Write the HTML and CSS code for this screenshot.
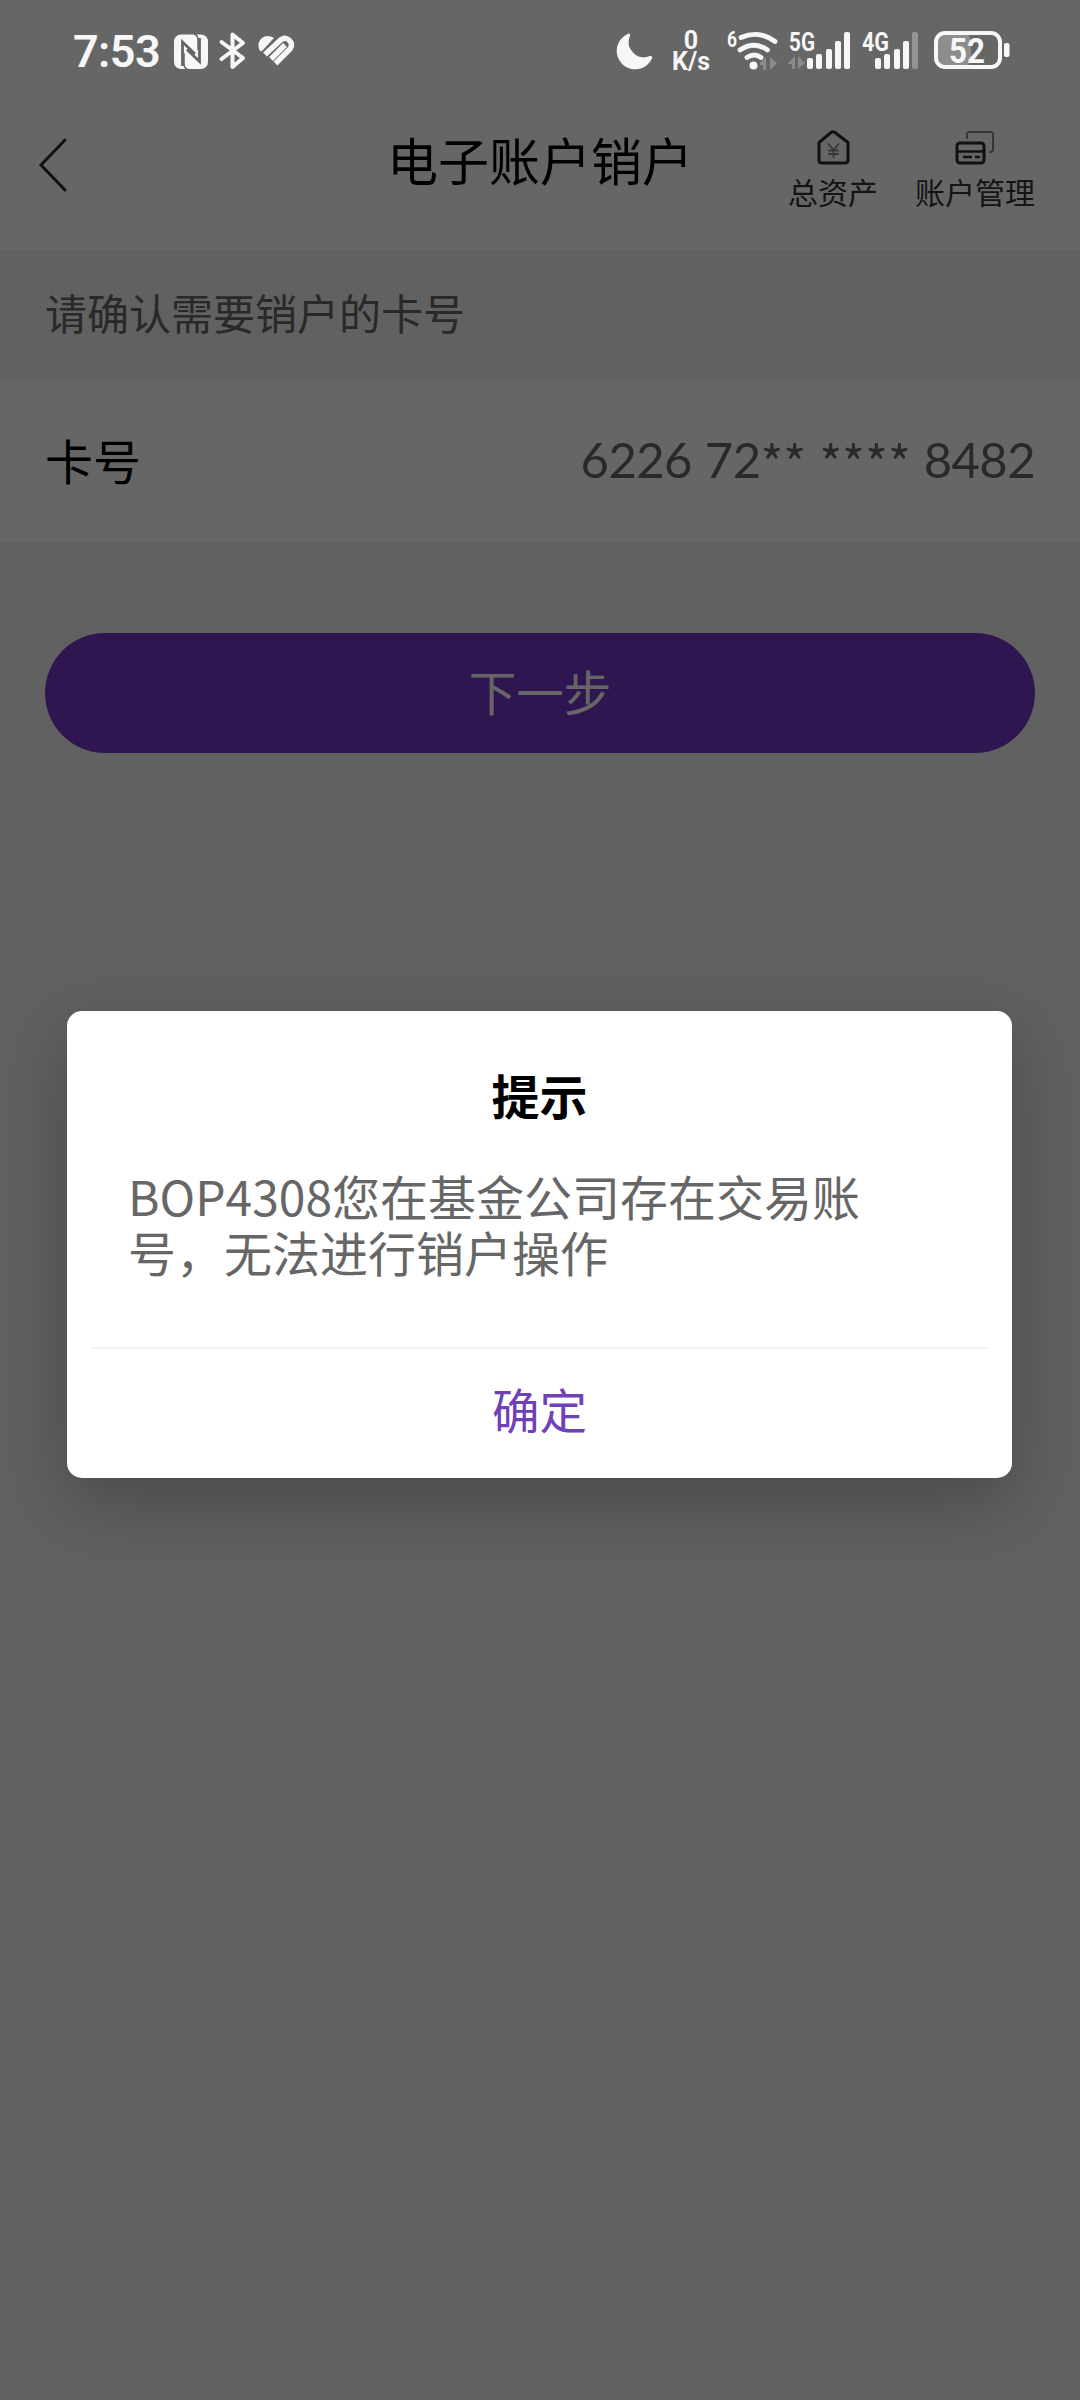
FILE: index.html
```html
<!DOCTYPE html>
<html lang="zh-CN">
<head>
<meta charset="utf-8">
<title>电子账户销户</title>
<link rel="stylesheet" href="styles.css">
</head>
<body>
<div class="screen">
  <header class="nav">
    <svg class="back" width="32" height="56" viewBox="0 0 32 56"><path d="M28 3 4 28l24 25"/></svg>
    <h1 class="title">电子账户销户</h1>
    <div class="actions">
      <div class="action">
        <svg width="36" height="36" viewBox="0 0 36 36" fill="none" stroke="#2b2b2b" stroke-width="3" stroke-linejoin="round" stroke-linecap="round">
          <path d="M4 13.5 16 3.5q2-1.600 4 0l13 10V31q0 3-3 3H7q-3 0-3-3z"/>
          <path stroke="#888" stroke-width="1.800" d="m13.500 15 5 6 5-6M18.500 21v7M14 21.500h9M14 25h9"/>
        </svg>
        <span>总资产</span>
      </div>
      <div class="action">
        <svg width="40" height="36" viewBox="0 0 40 36" fill="none" stroke="#2b2b2b" stroke-width="3" stroke-linejoin="round" stroke-linecap="round">
          <path stroke="#888" stroke-width="2" d="M12 9V5q0-2 2-2h22q2 0 2 2v15q0 3-3 3"/>
          <rect x="2" y="14" width="27" height="20" rx="3"/>
          <path d="M2 22.500h27" stroke-width="2.600"/><path stroke-linecap="butt" stroke-width="2.600" d="M8 28h9M20 28h5"/>
        </svg>
        <span>账户管理</span>
      </div>
    </div>
  </header>
  <p class="hint">请确认需要销户的卡号</p>
  <div class="row"><span class="label">卡号</span><span class="number">6226 72<span class="stars">** ****</span> 8482</span></div>
  <div class="submit"><button class="next">下一步</button></div>

  <div class="mask">
    <section class="dialog">
      <h2 class="dialog-title">提示</h2>
      <p class="dialog-text">BOP4308您在基金公司存在交易账号，无法进行销户操作</p>
      <button class="confirm">确定</button>
    </section>
  </div>

  <div class="status">
    <span class="clock">7:53</span>
    <svg class="nfc" width="34" height="36" viewBox="0 0 34 36">
      <rect x="0" y="0.500" width="34" height="34.500" rx="7" fill="#f7f7f7"/>
      <path d="M8.500 32V8L21 20M25.500 4v23.500L13 15.500" fill="none" stroke="#666" stroke-width="2.800"/>
      <path d="M20 0q4 1 4 6v10M14 35.500q-4-1-4-6V19" fill="none" stroke="#666" stroke-width="1.500"/>
    </svg>
    <svg class="bt" width="28" height="40" viewBox="0 0 28 40"><path d="M2.500 11 24 27 13.500 36V3.500L24 12 2.500 28" fill="none" stroke="#f7f7f7" stroke-width="4" stroke-linejoin="round" stroke-linecap="round"/></svg>
    <svg class="health" width="36" height="32" viewBox="0 0 36 32">
      <path d="M1 14Q-1 7 4 3t12 0L4 16Q2 17 1 14z" fill="#f7f7f7"/>
      <path d="M7 19.500 21.500 6q5-5 9.500-1t1 9L17.500 28.500M13 24 27 10" fill="none" stroke="#f7f7f7" stroke-width="5.400"/>
    </svg>
    <svg class="moon" width="37" height="37" viewBox="0 0 37 37"><path d="M14 2.500Q10 12 17 19.500T34 23Q37 22.500 36 25.500A18.500 18.500 0 1 1 11.500 1Q14.500-.5 14 2.500z" fill="#f7f7f7"/></svg>
    <div class="speed"><span>0</span><span>K/s</span></div>
    <svg class="wifi" width="54" height="42" viewBox="0 0 54 42">
      <text x="1" y="17" font-size="22" textLength="10" lengthAdjust="spacingAndGlyphs">6</text>
      <path d="M15 7.500Q33-.5 49 11.500M14 20q14-9.500 27.500 0M21 27.500q7.500-5 14 0" fill="none" stroke="#f7f7f7" stroke-width="4.800" stroke-linecap="round"/>
      <circle cx="27.500" cy="35.500" r="4" fill="#f7f7f7"/>
      <path d="M34 33 40 27v13h-3v-5h-3zM44 27l7 6-7 7z" fill="#8b8b8b"/>
    </svg>
    <svg class="sig5" width="63" height="42" viewBox="0 0 63 42">
      <text x="1" y="20.500" font-size="25" textLength="26" lengthAdjust="spacingAndGlyphs">5G</text>
      <path d="m0 33 7-7v13H4v-5H0zM10 26l7 7-7 6z" fill="#8b8b8b"/>
      <g fill="#f7f7f7"><rect x="19" y="28" width="6" height="11" rx="2"/><rect x="28" y="24" width="6" height="15" rx="2"/><rect x="38" y="19" width="6" height="20" rx="2"/><rect x="47" y="11" width="6" height="28" rx="2"/><rect x="56" y="2" width="6" height="37" rx="2"/></g>
    </svg>
    <svg class="sig4" width="58" height="42" viewBox="0 0 58 42">
      <text x="0" y="20.500" font-size="25" textLength="27" lengthAdjust="spacingAndGlyphs">4G</text>
      <g fill="#f7f7f7"><rect x="13" y="28" width="6" height="11" rx="2"/><rect x="22" y="24" width="6" height="15" rx="2"/><rect x="32" y="19" width="6" height="20" rx="2"/><rect x="41" y="11" width="6" height="28" rx="2"/><rect x="50" y="2" width="6" height="37" rx="2" fill="#949494"/></g>
    </svg>
    <svg class="battery" width="77" height="40" viewBox="0 0 77 40">
      <rect x="2" y="3" width="35" height="34" rx="8" fill="#8d8d8d"/>
      <rect x="2" y="3" width="64" height="34" rx="9" fill="none" stroke="#f7f7f7" stroke-width="4"/>
      <rect x="70" y="13" width="5.500" height="14" rx="2" fill="#f7f7f7"/>
      <text x="15" y="32.500" font-size="35" textLength="36" lengthAdjust="spacingAndGlyphs">52</text>
    </svg>
  </div>
</div>
</body>
</html>
```
FILE: styles.css
```css
* { box-sizing: border-box; margin: 0; padding: 0; }
body { font-family: "Noto Sans CJK SC", sans-serif; }
button { border: 0; background: none; font: inherit; }
svg { display: block; flex: none; overflow: visible; }

.screen { position: relative; width: 1080px; height: 2400px; overflow: hidden; background: #f3f3f3; }

.nav { display: grid; grid-template-columns: 345px 390px 345px; height: 250px; padding-top: 102px; background: #fff; }
.back { margin: 35px 0 0 37px; fill: none; stroke: #2b2b2b; stroke-width: 3; stroke-linecap: round; }
.title { padding-top: 20px; font-size: 51px; line-height: 74px; font-weight: 400; text-align: center; white-space: nowrap; }
.actions { display: flex; justify-content: flex-end; gap: 37px; padding: 27px 45px 0 0; }
.action { display: flex; flex-direction: column; align-items: center; font-size: 30px; line-height: 44px; color: #333; }
.action span { margin-top: 4px; }

.hint { height: 131px; padding-left: 45px; font-size: 42px; line-height: 124px; color: #666; }
.row { display: flex; align-items: center; justify-content: space-between; height: 161px; padding: 0 45px 5px; background: #fff; }
.label { font-size: 48px; }
.number { font-family: Lato, sans-serif; font-size: 49px; line-height: 70px; letter-spacing: -0.6px; word-spacing: 1px; color: #666; }
.stars { font-family: "Noto Sans CJK SC", sans-serif; line-height: 1; letter-spacing: 0; word-spacing: 2px; vertical-align: -4px; }
.submit { padding: 91px 45px 0; }
.next { display: block; width: 100%; height: 120px; padding-bottom: 4px; border-radius: 60px; background: #7538c8; color: #fff; font-size: 47.500px; line-height: 116px; }

.mask { position: absolute; inset: 0; padding: 1011px 68px 0 67px; background: rgba(0, 0, 0, .6); }
.dialog { display: flex; flex-direction: column; height: 467px; padding: 0 23px; border-radius: 15px; background: #fff; box-shadow: 0 24px 72px rgba(0, 0, 0, .25); }
.dialog-title { padding-top: 48px; font-size: 48px; line-height: 70px; font-weight: 600; text-align: center; }
.dialog-text { height: 218px; padding: 38px 86px 0 38px; font-size: 48px; line-height: 56px; color: #666; }
.confirm { height: 131px; padding-bottom: 10px; border-top: 2px solid #f3f3f3; color: #7040b8; font-size: 47.500px; line-height: 119px; }

.status { position: absolute; top: 0; left: 0; width: 1080px; height: 102px; display: flex; align-items: flex-start; color: #f7f7f7; font-family: Roboto, sans-serif; font-weight: 600; }
.status text { fill: #f7f7f7; font-family: Roboto, sans-serif; font-weight: 700; }
.clock { width: 100px; margin: 25px 0 0 73px; font-size: 45px; line-height: 53px; letter-spacing: -.6px; white-space: nowrap; }
.nfc { margin: 34px 0 0 1px; }
.bt { margin: 31px 0 0 11px; }
.health { margin: 35px 0 0 11px; }
.moon { margin: 33px 0 0 322px; }
.speed { display: flex; flex-direction: column; align-items: center; width: 40px; margin: 30px 0 0 18px; font-size: 25px; line-height: 21px; font-weight: 700; }
.wifi { margin: 30px 0 0 15px; }
.sig5 { margin: 30px 0 0 8px; }
.sig4 { margin: 30px 0 0 11px; }
.battery { margin: 30px 0 0 14px; }
```
